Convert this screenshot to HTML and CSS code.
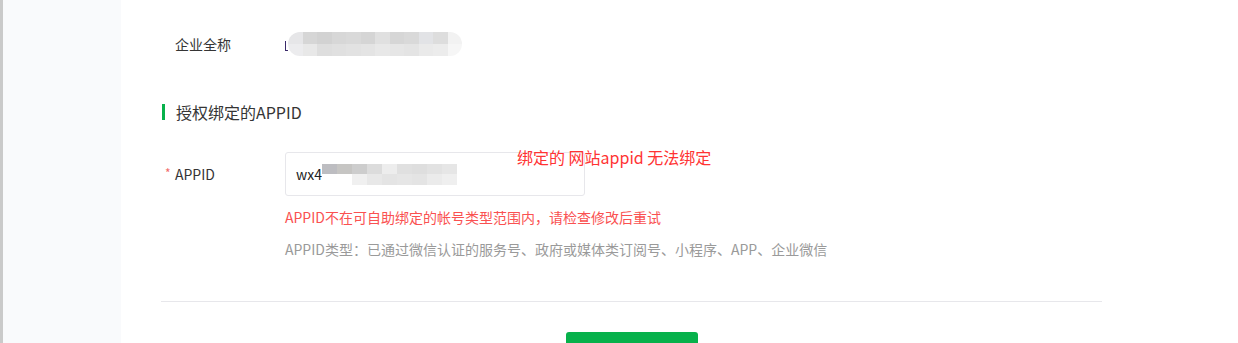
FILE: index.html
```html
<!DOCTYPE html>
<html lang="zh-CN">
<head>
  <meta charset="UTF-8">
  <title>授权绑定的APPID</title>
  <link rel="stylesheet" href="styles.css">
</head>
<body>
  <div class="layout">
    <!-- Боковая панель -->
    <aside class="side"></aside>

    <main class="main">
      <div class="form">
        <!-- 企业全称 -->
        <div class="row info-row">
          <span class="label">企业全称</span>
          <div class="value">
            <span class="mark"></span>
            <div class="mosaic mosaic-name">
              <i style="background:#e6e6e8"></i><i style="background:#d6d6d6"></i><i style="background:#d2d2d2"></i><i style="background:#d7d7d7"></i><i style="background:#d9d9d9"></i><i style="background:#d5d5d5"></i><i style="background:#e0e0e0"></i><i style="background:#d6d6d6"></i><i style="background:#d9d9d9"></i><i style="background:#e2e3e6"></i><i style="background:#dddddd"></i><i style="background:#f2f2f2"></i>
              <i style="background:#ececee"></i><i style="background:#e8e8e8"></i><i style="background:#dedede"></i><i style="background:#e0e0e0"></i><i style="background:#e2e2e2"></i><i style="background:#e4e4e4"></i><i style="background:#e8e8e8"></i><i style="background:#e6e6e6"></i><i style="background:#e4e4e4"></i><i style="background:#eaeaea"></i><i style="background:#ececec"></i><i style="background:#f6f6f6"></i>
            </div>
          </div>
        </div>

        <!-- Заголовок секции -->
        <h3 class="section-title">授权绑定的APPID</h3>

        <!-- Поле APPID -->
        <div class="row field-row">
          <span class="label"><i class="req">*</i>APPID</span>
          <div class="control">
            <div class="input">
              <span class="input-text">wx4</span>
              <div class="mosaic mosaic-id">
                <i style="background:#bdbdc1"></i><i style="background:#c6c5c3"></i><i style="background:#cdcdcd"></i><i style="background:#dcdcdc"></i><i style="background:#ededed"></i><i style="background:#e0e0e0"></i><i style="background:#dedede"></i><i style="background:#e2e2e2"></i><i style="background:#e6e6e6"></i>
                <i style="background:#ffffff"></i><i style="background:#ffffff"></i><i style="background:#f0f0f0"></i><i style="background:#e8e8e8"></i><i style="background:#e4e4e4"></i><i style="background:#e6e6e6"></i><i style="background:#e4e4e4"></i><i style="background:#ebebeb"></i><i style="background:#efefef"></i>
              </div>
            </div>
            <p class="error">APPID不在可自助绑定的帐号类型范围内，请检查修改后重试</p>
            <p class="hint">APPID类型：已通过微信认证的服务号、政府或媒体类订阅号、小程序、APP、企业微信</p>
          </div>
        </div>

        <div class="divider"></div>

        <div class="actions">
          <button class="btn" aria-label="确定"></button>
        </div>
      </div>

      <!-- Пометка поверх скриншота -->
      <div class="note">绑定的 网站appid 无法绑定</div>
    </main>
  </div>
</body>
</html>
```

FILE: styles.css
```css
    body {
      margin: 0;
      padding: 0;
      background-color: #fff;
      color: #353535;
      font-family: 'Noto Sans CJK SC', 'Noto Sans', sans-serif;
      font-size: 14px;
      overflow: hidden;
    }

    .layout {
      display: flex;
      min-height: 100vh;
    }

    .side {
      width: 118px;
      flex-shrink: 0;
      background-color: #f9fafc;
      border-left: 3px solid #cacaca;
    }

    .main {
      flex: 1;
      position: relative;
      padding: 32px 0 0 40px;
    }

    .form {
      width: 941px;
    }

    .row {
      display: flex;
    }

    .label {
      width: 110px;
      padding-left: 14px;
      flex-shrink: 0;
      position: relative;
    }

    /* 企业全称 */
    .info-row {
      height: 24px;
      line-height: 24px;
    }
    .value {
      display: flex;
      align-items: center;
    }
    .mark {
      width: 3px;
      height: 10px;
      margin-top: 4px;
      border-left: 1px solid #3a2a6a;
      border-bottom: 1px solid #3a2a6a;
      box-sizing: border-box;
    }

    .mosaic {
      display: grid;
      filter: blur(0.6px);
    }
    .mosaic i {
      display: block;
    }
    .mosaic-name {
      grid-template-columns: repeat(12, 14.5px);
      grid-auto-rows: 12px;
      border-radius: 12px;
      overflow: hidden;
    }
    .mosaic-id {
      grid-template-columns: repeat(9, 15px);
      grid-auto-rows: 10.5px;
      margin-left: 0;
    }

    /* Заголовок секции */
    .section-title {
      margin: 45px 0 0 1px;
      display: flex;
      align-items: center;
      height: 22px;
      font-size: 16px;
      font-weight: normal;
      color: #353535;
    }
    .section-title::before {
      content: '';
      width: 3px;
      height: 16px;
      margin-right: 11px;
      background-color: #07b14b;
    }

    /* Поле APPID */
    .field-row {
      margin-top: 29px;
    }
    .field-row .label {
      line-height: 44px;
      height: 44px;
    }
    .req {
      position: absolute;
      left: 4px;
      top: -1px;
      font-style: normal;
      font-size: 12px;
      color: #f26b6b;
    }

    .input {
      width: 300px;
      height: 44px;
      box-sizing: border-box;
      border: 1px solid #e7e7eb;
      border-radius: 3px;
      padding-left: 10px;
      display: flex;
      align-items: center;
    }
    .input-text {
      color: #222;
      font-size: 14px;
    }

    .error,
    .hint {
      margin: 0;
      line-height: 20px;
      font-size: 14px;
    }
    .error {
      margin-top: 11px;
      color: #fa5151;
    }
    .hint {
      margin-top: 12px;
      color: #9a9a9a;
    }

    .divider {
      margin-top: 42px;
      height: 1px;
      background-color: #e7e7eb;
    }

    .actions {
      display: flex;
      justify-content: center;
      margin-top: 30px;
    }
    .btn {
      width: 132px;
      height: 36px;
      border: none;
      border-radius: 3px;
      background-color: #07b14b;
      color: #fff;
      font-family: inherit;
      font-size: 14px;
    }

    /* Пометка */
    .note {
      position: absolute;
      left: 396px;
      top: 145px;
      font-size: 16px;
      line-height: 24px;
      color: #ff3333;
    }
```
